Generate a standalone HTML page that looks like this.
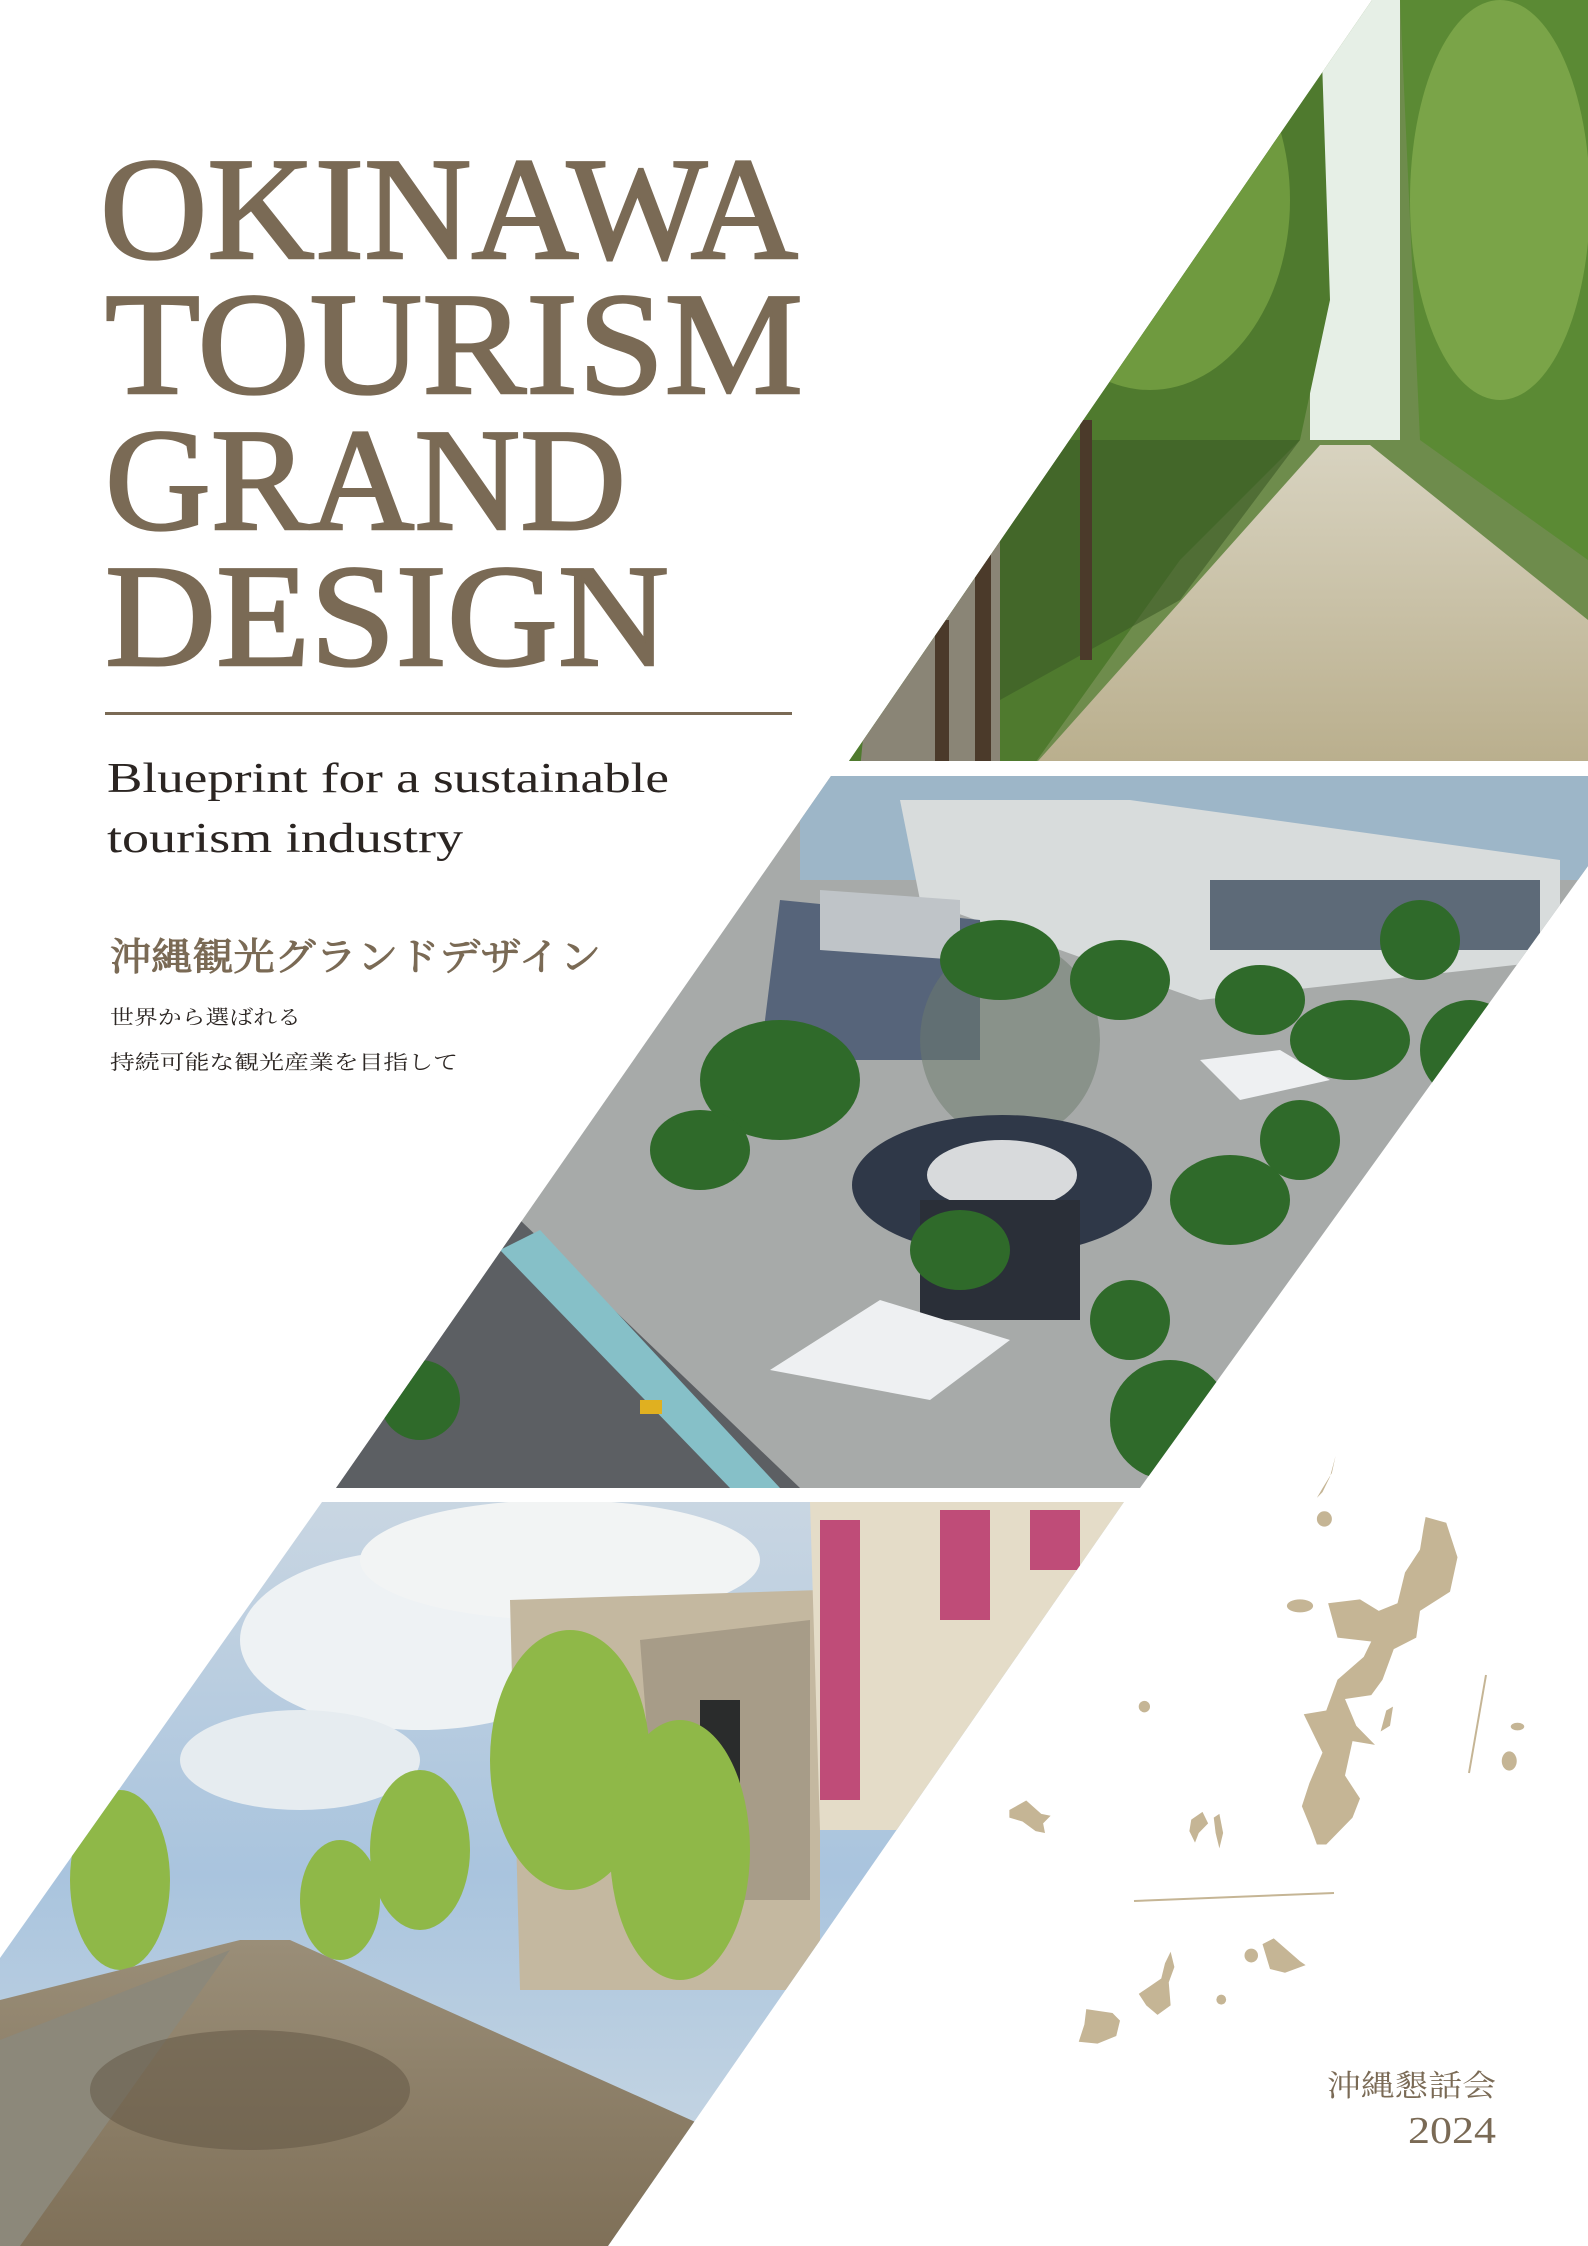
<!DOCTYPE html>
<html><head><meta charset="utf-8">
<style>
html,body{margin:0;padding:0;background:#fff;}
svg{display:block;}
</style></head>
<body>
<svg width="1588" height="2246" viewBox="0 0 1588 2246" xmlns="http://www.w3.org/2000/svg">
<defs>
<clipPath id="c1"><polygon points="1372,0 1588,0 1588,761 849,761"/></clipPath>
<clipPath id="c2"><polygon points="831,776 1588,776 1588,866 1140,1488 336,1488"/></clipPath>
<clipPath id="c3"><polygon points="322,1502 1124,1502 608,2246 0,2246 0,1958"/></clipPath>
<linearGradient id="path1" x1="0" y1="0" x2="0" y2="1"><stop offset="0" stop-color="#d8d3c0"/><stop offset="1" stop-color="#b9ae8c"/></linearGradient>
<linearGradient id="sky3" x1="0" y1="0" x2="0" y2="1"><stop offset="0" stop-color="#c9d6e2"/><stop offset="0.5" stop-color="#a9c4de"/><stop offset="1" stop-color="#cfdbe4"/></linearGradient>
<linearGradient id="pave" x1="0" y1="0" x2="0" y2="1"><stop offset="0" stop-color="#9a8e78"/><stop offset="1" stop-color="#7f7058"/></linearGradient>
</defs>

<!-- top image: tree avenue -->
<g clip-path="url(#c1)">
<rect x="840" y="0" width="760" height="770" fill="#6e8c4c"/>
<rect x="1310" y="0" width="90" height="440" fill="#e6efe6"/>
<polygon points="1320,445 1370,445 1588,620 1588,770 1030,770" fill="url(#path1)"/>
<polygon points="840,0 1320,0 1330,300 1300,440 1180,560 1030,770 840,770" fill="#4f7a2e"/>
<polygon points="1000,440 1300,440 1180,600 1000,700" fill="#3c5a26" opacity="0.6"/>
<polygon points="880,560 1000,480 1000,770 860,770" fill="#8a8576"/>
<polygon points="1400,0 1588,0 1588,560 1420,440" fill="#5b8a34"/>
<ellipse cx="1150" cy="200" rx="140" ry="190" fill="#6f9a3f"/>
<ellipse cx="1500" cy="200" rx="90" ry="200" fill="#7aa448"/>
<rect x="975" y="500" width="16" height="270" fill="#4b3a2a"/>
<rect x="1080" y="420" width="12" height="240" fill="#4b3a2a"/>
<rect x="935" y="620" width="14" height="150" fill="#4b3a2a"/>
</g>

<!-- middle image: aerial plaza -->
<g clip-path="url(#c2)">
<rect x="330" y="770" width="1260" height="730" fill="#a7aaa9"/>
<rect x="800" y="770" width="790" height="110" fill="#9db6c8"/>
<polygon points="900,800 1130,800 1560,860 1560,960 1200,1000 920,900" fill="#d8dcdc"/>
<rect x="1210" y="880" width="330" height="70" fill="#5d6a78"/>
<polygon points="780,900 980,920 980,1060 760,1060" fill="#56647a"/>
<polygon points="820,890 960,900 960,960 820,950" fill="#bfc4c8"/>
<ellipse cx="1010" cy="1040" rx="90" ry="100" fill="#6c7a6c" opacity="0.5"/>
<polygon points="330,1488 520,1220 800,1488" fill="#5c5f63"/>
<polygon points="500,1250 540,1230 780,1488 730,1488" fill="#86c0c8"/>
<ellipse cx="1002" cy="1185" rx="150" ry="70" fill="#2f3848"/>
<ellipse cx="1002" cy="1175" rx="75" ry="35" fill="#d8dadc"/>
<rect x="920" y="1200" width="160" height="120" fill="#2a2f38"/>
<polygon points="770,1370 880,1300 1010,1340 930,1400" fill="#eef0f2"/>
<g fill="#2f6a2a">
<ellipse cx="1000" cy="960" rx="60" ry="40"/><ellipse cx="1120" cy="980" rx="50" ry="40"/>
<ellipse cx="780" cy="1080" rx="80" ry="60"/><ellipse cx="700" cy="1150" rx="50" ry="40"/>
<ellipse cx="1350" cy="1040" rx="60" ry="40"/><ellipse cx="1470" cy="1050" rx="50" ry="50"/>
<ellipse cx="960" cy="1250" rx="50" ry="40"/><ellipse cx="1230" cy="1200" rx="60" ry="45"/>
<ellipse cx="1130" cy="1320" rx="40" ry="40"/><ellipse cx="1170" cy="1420" rx="60" ry="60"/>
<ellipse cx="1300" cy="1140" rx="40" ry="40"/><ellipse cx="1420" cy="940" rx="40" ry="40"/>
<ellipse cx="1260" cy="1000" rx="45" ry="35"/><ellipse cx="420" cy="1400" rx="40" ry="40"/>
</g>
<polygon points="1200,1060 1280,1050 1330,1080 1240,1100" fill="#eef0f2"/>
<rect x="640" y="1400" width="22" height="14" fill="#e0b020"/>
</g>

<!-- bottom image: street -->
<g clip-path="url(#c3)">
<rect x="0" y="1500" width="1130" height="750" fill="url(#sky3)"/>
<ellipse cx="420" cy="1640" rx="180" ry="90" fill="#eef2f4"/>
<ellipse cx="560" cy="1560" rx="200" ry="60" fill="#f2f4f4"/>
<ellipse cx="300" cy="1760" rx="120" ry="50" fill="#e6ecf0"/>
<polygon points="510,1600 820,1590 820,1990 520,1990" fill="#c4b8a0"/>
<polygon points="640,1640 810,1620 810,1900 660,1900" fill="#a79c88"/>
<rect x="700" y="1700" width="40" height="150" fill="#2a2c2c"/>
<polygon points="810,1502 1124,1502 900,1830 820,1830" fill="#e4dcc8"/>
<g fill="#b8326a" opacity="0.85">
<rect x="820" y="1520" width="40" height="280"/><rect x="940" y="1510" width="50" height="110"/><rect x="1030" y="1510" width="50" height="60"/>
</g>
<g fill="#8fb848">
<ellipse cx="570" cy="1760" rx="80" ry="130"/><ellipse cx="680" cy="1850" rx="70" ry="130"/>
<ellipse cx="420" cy="1850" rx="50" ry="80"/><ellipse cx="120" cy="1880" rx="50" ry="90"/>
<ellipse cx="340" cy="1900" rx="40" ry="60"/>
</g>
<polygon points="0,2000 240,1940 290,1940 780,2160 700,2246 0,2246" fill="url(#pave)"/>
<polygon points="0,2040 230,1950 20,2246 0,2246" fill="#8c887a"/>
<ellipse cx="250" cy="2090" rx="160" ry="60" fill="#5f5442" opacity="0.5"/>
</g>

<!-- Title -->
<g fill="#7a6a55" stroke="#7a6a55" stroke-width="2.5" font-family="'Liberation Serif', serif" font-size="146">
<text x="100" y="258" textLength="698" lengthAdjust="spacingAndGlyphs">OKINAWA</text>
<text x="105" y="393" textLength="698" lengthAdjust="spacingAndGlyphs">TOURISM</text>
<text x="105" y="529" textLength="521" lengthAdjust="spacingAndGlyphs">GRAND</text>
<text x="105" y="665" textLength="564" lengthAdjust="spacingAndGlyphs">DESIGN</text>
</g>
<rect x="105" y="712" width="687" height="3" fill="#7a6a55"/>
<g fill="#2b2522" font-family="'Liberation Serif', serif" font-size="42">
<text x="107" y="792" textLength="562" lengthAdjust="spacingAndGlyphs">Blueprint for a sustainable</text>
<text x="107" y="852" textLength="356" lengthAdjust="spacingAndGlyphs">tourism industry</text>
</g>
<g font-family="'Liberation Serif','Noto Serif CJK SC',serif">
<text x="110" y="970" fill="#7a6a55" stroke="#7a6a55" stroke-width="1" font-size="38" textLength="491" lengthAdjust="spacingAndGlyphs">沖縄観光グランドデザイン</text>
<text x="110" y="1024" fill="#2b2522" font-size="20" textLength="191" lengthAdjust="spacingAndGlyphs">世界から選ばれる</text>
<text x="110" y="1069" fill="#2b2522" font-size="20" textLength="348" lengthAdjust="spacingAndGlyphs">持続可能な観光産業を目指して</text>
<text x="1327" y="2096" fill="#7a6a55" font-size="30" textLength="169" lengthAdjust="spacingAndGlyphs">沖縄懇話会</text>
<text x="1408" y="2143" fill="#7a6a55" font-size="38" textLength="88" lengthAdjust="spacingAndGlyphs">2024</text>
</g>

<!-- Map -->
<g transform="translate(1000,1450) scale(0.375,0.383)" fill="#c5b595">
<polygon points="1135,175 1190,190 1220,280 1200,370 1120,420 1110,490 1050,520 1020,600 990,640 920,650 950,720 1000,770 940,760 920,850 960,910 940,960 870,1030 845,1030 830,990 805,930 825,870 860,790 810,690 870,680 900,600 970,540 990,500 900,490 875,400 960,390 1010,420 1060,400 1080,320 1120,260 1130,200"/>
<polygon points="895,15 885,60 860,100 845,125 860,110 880,70"/>
<circle cx="865" cy="180" r="20"/>
<ellipse cx="800" cy="407" rx="35" ry="17"/>
<circle cx="385" cy="670" r="15"/>
<polygon points="25,940 70,915 110,950 135,955 115,975 120,1000 95,995 60,970 25,960"/>
<polygon points="510,965 540,945 555,975 530,1000 520,1025 505,995"/>
<polygon points="570,960 585,950 595,1000 585,1040 575,1000"/>
<ellipse cx="1380" cy="722" rx="18" ry="10"/>
<ellipse cx="1358" cy="812" rx="20" ry="25"/>
<polygon points="1030,680 1048,670 1040,720 1015,735"/>
<polygon points="730,1275 800,1335 815,1345 760,1365 720,1355 700,1290"/>
<circle cx="670" cy="1320" r="18"/>
<circle cx="590" cy="1435" r="13"/>
<polygon points="455,1310 465,1350 450,1390 455,1450 420,1475 390,1450 370,1420 400,1400 430,1380 440,1340"/>
<polygon points="230,1460 300,1470 320,1490 310,1530 260,1550 210,1545 225,1500"/>
</g>
<g stroke="#c5b595" stroke-width="2">
<line x1="1134" y1="1901" x2="1334" y2="1893"/>
<line x1="1486" y1="1675" x2="1469" y2="1773"/>
</g>
</svg>
</body></html>
